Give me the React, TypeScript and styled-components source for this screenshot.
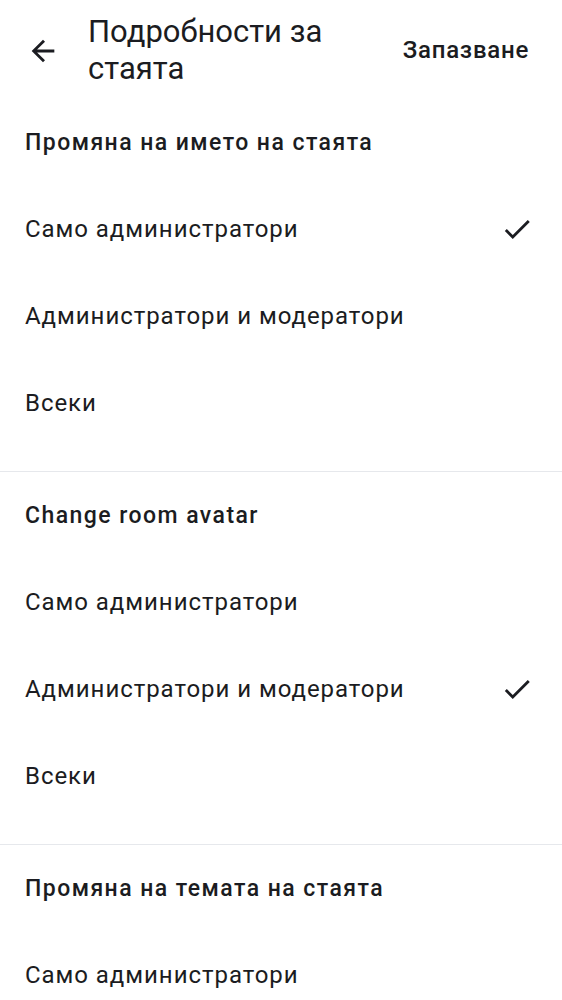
import React from "react";
import styled, { createGlobalStyle } from "styled-components";

const Global = createGlobalStyle`
  html, body { margin: 0; padding: 0; background: #ffffff; }
  body { font-family: Roboto, "Noto Sans", sans-serif; color: #1b1c21; -webkit-font-smoothing: antialiased; }
`;

const Page = styled.div`
  width: 562px;
  background: #ffffff;
`;

const TopBar = styled.header`
  display: flex;
  align-items: center;
  height: 99px;
  padding: 0 33px 0 26px;
  box-sizing: border-box;
`;

const BackButton = styled.button`
  display: flex;
  align-items: center;
  justify-content: center;
  width: 34px;
  height: 34px;
  padding: 0;
  margin: 2px 28px 0 0;
  border: none;
  background: none;
  color: #1b1c21;
  flex-shrink: 0;
`;

const Title = styled.h1`
  flex: 1;
  margin: 0;
  font-size: 31px;
  line-height: 37px;
  font-weight: 400;
  letter-spacing: 0;
`;

const SaveButton = styled.button`
  border: none;
  background: none;
  padding: 0;
  font-family: Roboto, sans-serif;
  font-size: 24px;
  font-weight: 500;
  color: #1b1c21;
  letter-spacing: 0.75px;
  flex-shrink: 0;
`;

const Section = styled.section<{ $last?: boolean }>`
  padding-bottom: 25px;
  border-bottom: ${(p) => (p.$last ? "none" : "1px solid #e6e8ec")};
`;

const SectionHeader = styled.div`
  display: flex;
  align-items: center;
  height: 86px;
  padding: 0 25px;
  font-size: 23px;
  font-weight: 500;
  letter-spacing: 1.45px;
`;

const Option = styled.div`
  display: flex;
  align-items: center;
  justify-content: space-between;
  height: 87px;
  padding: 0 28px 0 25px;
  font-size: 24px;
  font-weight: 400;
  letter-spacing: 0.95px;
`;

const Check = () => (
  <svg width="34" height="34" viewBox="0 0 24 24" fill="#1b1c21">
    <path d="M9 16.17L4.83 12l-1.42 1.41L9 19 21 7l-1.41-1.41z" />
  </svg>
);

const Arrow = () => (
  <svg width="34" height="34" viewBox="0 0 24 24" fill="#1b1c21">
    <path d="M20 11H7.83l5.59-5.59L12 4l-8 8 8 8 1.41-1.41L7.83 13H20v-2z" />
  </svg>
);

type Sec = { title: string; selected: number };
const options = ["Само администратори", "Администратори и модератори", "Всеки"];
const sections: Sec[] = [
  { title: "Промяна на името на стаята", selected: 0 },
  { title: "Change room avatar", selected: 1 },
  { title: "Промяна на темата на стаята", selected: -1 },
];

export default function App() {
  return (
    <Page>
      <Global />
      <TopBar>
        <BackButton aria-label="Назад"><Arrow /></BackButton>
        <Title>Подробности за стаята</Title>
        <SaveButton>Запазване</SaveButton>
      </TopBar>
      {sections.map((s, i) => (
        <Section key={i} $last={i === sections.length - 1}>
          <SectionHeader>{s.title}</SectionHeader>
          {options.map((o, j) => (
            <Option key={j}>
              <span>{o}</span>
              {s.selected === j && <Check />}
            </Option>
          ))}
        </Section>
      ))}
    </Page>
  );
}
